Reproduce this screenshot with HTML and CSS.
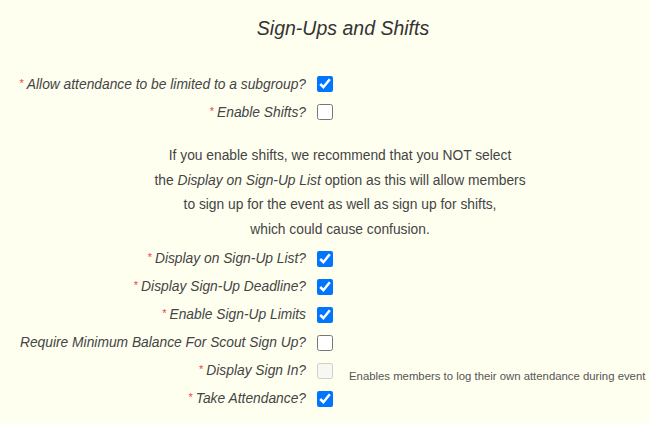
FILE: index.html
```html
<!DOCTYPE html>
<html lang="en">
<head>
  <meta charset="UTF-8">
  <title>Sign-Ups and Shifts</title>
  <link rel="stylesheet" href="styles.css">
</head>
<body>
  <div class="section">
    <h2 class="sectionTitle">Sign-Ups and Shifts</h2>

    <div class="fieldGroup first">
      <div class="field">
        <label class="fieldLabel"><span class="req">*</span>Allow attendance to be limited to a subgroup?</label>
        <input type="checkbox" checked>
      </div>
      <div class="field">
        <label class="fieldLabel"><span class="req">*</span>Enable Shifts?</label>
        <input type="checkbox">
      </div>
    </div>

    <p class="note">
      If you enable shifts, we recommend that you NOT select<br>
      the <em>Display on Sign-Up List</em> option as this will allow members<br>
      to sign up for the event as well as sign up for shifts,<br>
      which could cause confusion.
    </p>

    <div class="fieldGroup">
      <div class="field">
        <label class="fieldLabel"><span class="req">*</span>Display on Sign-Up List?</label>
        <input type="checkbox" checked>
      </div>
      <div class="field">
        <label class="fieldLabel"><span class="req">*</span>Display Sign-Up Deadline?</label>
        <input type="checkbox" checked>
      </div>
      <div class="field">
        <label class="fieldLabel"><span class="req">*</span>Enable Sign-Up Limits</label>
        <input type="checkbox" checked>
      </div>
      <div class="field">
        <label class="fieldLabel">Require Minimum Balance For Scout Sign Up?</label>
        <input type="checkbox">
      </div>
      <div class="field">
        <label class="fieldLabel"><span class="req">*</span>Display Sign In?</label>
        <input type="checkbox" disabled>
        <span class="help">Enables members to log their own attendance during event</span>
      </div>
      <div class="field">
        <label class="fieldLabel"><span class="req">*</span>Take Attendance?</label>
        <input type="checkbox" checked>
      </div>
    </div>
  </div>
</body>
</html>
```

FILE: styles.css
```css
body{
  margin: 0;
  background: #fffff0;
  color: #444;
  font-family: "Liberation Sans", Arial, sans-serif;
}
.section{
  padding-top: 16px;
}
.sectionTitle{
  margin: 0 0 0 36px;
  text-align: center;
  font-size: 19.5px;
  line-height: 24px;
  font-weight: normal;
  font-style: italic;
  color: #333;
}
.fieldGroup.first{
  margin-top: 30px;
}
.field{
  display: grid;
  grid-template-columns: 306px 16px auto;
  column-gap: 11px;
  align-items: center;
  height: 28px;
}
.fieldLabel{
  text-align: right;
  white-space: nowrap;
  font-size: 13.8px;
  font-style: italic;
}
.req{
  color: #ef4444;
  font-size: 11px;
  font-style: normal;
  margin-right: 3px;
  vertical-align: 2px;
}
.field input{
  width: 16px;
  height: 16px;
  margin: 0;
}
.help{
  margin-left: 5px;
  padding-top: 11px;
  font-size: 11.35px;
  color: #555;
  white-space: nowrap;
}
.note{
  margin: 18px 0 2px 30px;
  text-align: center;
  font-size: 13.8px;
  line-height: 24.7px;
  color: #444;
}
```
